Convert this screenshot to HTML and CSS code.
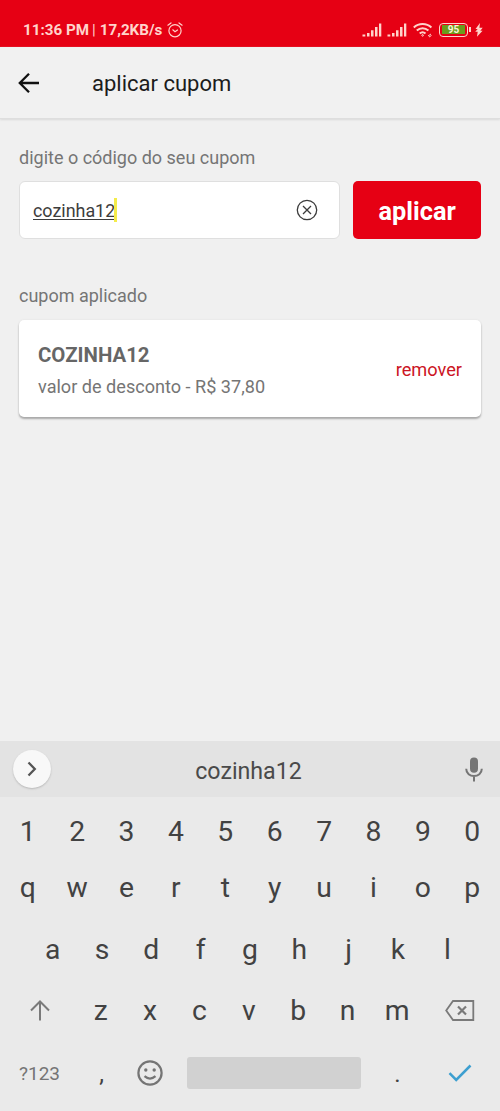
FILE: index.html
```html
<!DOCTYPE html>
<html lang="pt-BR">
<head>
<meta charset="utf-8">
<title>aplicar cupom</title>
<link rel="stylesheet" href="styles.css">
</head>
<body>
<div class="screen">
  <div class="status">
    <span class="clock">11:36 PM</span><span class="divider">|</span><span class="speed">17,2KB/s</span>
    <svg class="alarm" width="16" height="16" viewBox="0 0 16 16" fill="none" stroke="currentColor" stroke-width="1.2" stroke-linecap="round"><circle cx="8" cy="8.7" r="6.1"/><path d="M.9 3.2 4 .9M15.1 3.2 12 .9M5.8 7.8 8 9.7l2.5-1.7"/></svg>
    <div class="indicators">
      <svg width="20" height="14" viewBox="0 0 20 14" fill="currentColor"><path d="M.5 13.5v-2h2.8v2zM5 10h2.5v3.5H5zM9 7.2h2.5v6.3H9zM13 4h2.5v9.5H13zM17 .5h2.3v13H17z"/></svg>
      <svg width="20" height="14" viewBox="0 0 20 14" fill="currentColor"><path d="M.5 13.5v-2h2.8v2zM5 10h2.5v3.5H5zM9 7.2h2.5v6.3H9zM13 4h2.5v9.5H13zM17 .5h2.3v13H17z"/></svg>
      <svg class="wifi" width="20" height="16" viewBox="0 0 20 16" fill="none" stroke="currentColor" stroke-width="2"><path d="M.8 5.4a13 13 0 0 1 17.6 0M3.8 8.6a8.6 8.6 0 0 1 11.6 0M6.7 11.5a4.4 4.4 0 0 1 5.8 0"/><circle cx="9.6" cy="13.4" r=".8" stroke-width="1"/><path stroke-width="1" d="m15 14 3-2m-2 3 2.5-1.5"/></svg>
      <div class="battery"><span class="charge">95</span></div>
      <svg class="bolt" width="8" height="14" viewBox="0 0 8 14" fill="currentColor"><path d="M5 0 .5 6h2.2L.2 8.8h2.5L2 13.8 7.6 7.7H5.3l2.4-3H4.4z"/></svg>
    </div>
  </div>
  <header class="appbar">
    <svg width="22" height="22" viewBox="0 0 22 22" fill="none" stroke="#111" stroke-width="2.3"><path d="M21 11H2M11 1.8 1.8 11l9.2 9.2"/></svg>
    <h1 class="title">aplicar cupom</h1>
  </header>
  <main class="content">
    <label class="label">digite o código do seu cupom</label>
    <div class="form">
      <div class="field">
        <span class="value">cozinha12</span><span class="caret"></span>
        <svg class="clear" width="22" height="22" viewBox="0 0 22 22" fill="none" stroke="#3c3c3c" stroke-width="1.3"><circle cx="11" cy="11" r="9.7"/><path d="m7 7 8 8m0-8-8 8"/></svg>
      </div>
      <button class="apply">aplicar</button>
    </div>
    <div class="label applied">cupom aplicado</div>
    <section class="coupon">
      <div class="details">
        <div class="code">COZINHA12</div>
        <div class="discount">valor de desconto - R$ 37,80</div>
      </div>
      <span class="remove">remover</span>
    </section>
  </main>
  <div class="suggestions">
    <div class="expand"><svg width="10" height="16" viewBox="0 0 10 16" fill="none" stroke="#555" stroke-width="2.3"><path d="m1.5 1.5 6.3 6.5-6.3 6.5"/></svg></div>
    <span class="suggestion">cozinha12</span>
    <svg class="mic" width="18" height="25" viewBox="0 0 18 25" fill="none" stroke="#757575" stroke-width="2"><rect x="5" y=".5" width="8" height="15.3" rx="4" fill="#757575" stroke="none"/><path d="M1.2 11.8c0 9.6 15.6 9.6 15.6 0M9 19v5.5"/></svg>
  </div>
  <div class="keyboard">
    <div class="row numbers"><span>1</span><span>2</span><span>3</span><span>4</span><span>5</span><span>6</span><span>7</span><span>8</span><span>9</span><span>0</span></div>
    <div class="row top"><span>q</span><span>w</span><span>e</span><span>r</span><span>t</span><span>y</span><span>u</span><span>i</span><span>o</span><span>p</span></div>
    <div class="row home"><span>a</span><span>s</span><span>d</span><span>f</span><span>g</span><span>h</span><span>j</span><span>k</span><span>l</span></div>
    <div class="row lower">
      <span class="icon"><svg width="20" height="21" viewBox="0 0 20 21" fill="none" stroke="#7a7a7a" stroke-width="2"><path d="M10 20.5V2M1 10.5l9-9 9 9"/></svg></span>
      <span>z</span><span>x</span><span>c</span><span>v</span><span>b</span><span>n</span><span>m</span>
      <span class="icon backspace"><svg width="30" height="21" viewBox="0 0 30 21" fill="none" stroke="#7a7a7a" stroke-width="1.8"><path d="M8 1h20.3v19H8L1.2 10.5z"/><path stroke-width="2.2" d="m13 6.5 8 8m0-8-8 8"/></svg></span>
    </div>
    <div class="row bottom">
      <span class="symbols">?123</span><span class="comma">,</span>
      <span class="icon"><svg width="26" height="26" viewBox="0 0 26 26" fill="none" stroke="#757575" stroke-width="2.2"><circle cx="13" cy="13" r="11.6"/><path d="M7.5 16.2q5.5 4.8 11 0"/><circle cx="8.8" cy="10" r="1.7" fill="#757575" stroke="none"/><circle cx="17.2" cy="10" r="1.7" fill="#757575" stroke="none"/></svg></span>
      <div class="space"></div>
      <span class="dot">.</span>
      <span class="icon"><svg width="24" height="18" viewBox="0 0 24 18" fill="none" stroke="#3d9fd0" stroke-width="2.5"><path d="m1.5 9.2 6.7 6.8L22.5 1.5"/></svg></span>
    </div>
  </div>
</div>
</body>
</html>
```
FILE: styles.css
```css
* { box-sizing: border-box; }
body { margin: 0; font-family: Roboto, sans-serif; background: #f0f0f0; }
svg { display: block; flex: none; }
.screen { width: 500px; height: 1111px; display: flex; flex-direction: column; overflow: hidden; }

.status { height: 47px; flex: none; background: #e60014; color: #ffd3cb; display: flex; align-items: center; padding: 13px 17px 0 23px; font-size: 15.2px; font-weight: 700; white-space: nowrap; }
.divider { font-weight: 400; margin: 0 4px 0 3px; }
.alarm { margin-left: 5px; }
.indicators { margin-left: auto; display: flex; align-items: center; gap: 5px; }
.wifi { margin-left: 1px; }
.battery { width: 29px; height: 14px; border: 1.5px solid #ffd3cb; border-radius: 4px; padding: 1px 2px; margin: 0 2px 0 1px; position: relative; }
.battery::after { content: ""; position: absolute; right: -4px; top: 3px; width: 2px; height: 5px; background: #ffd3cb; }
.charge { display: block; height: 9px; background: #6a9c1b; font-size: 10px; line-height: 9px; text-align: center; color: #fff3dc; }

.appbar { height: 72px; flex: none; background: #f1f1f1; border-bottom: 1px solid #dedede; box-shadow: 0 1px 2px #d9d9d9; display: flex; align-items: center; padding: 1px 18px 0; gap: 52px; }
.title { margin: 1px 0 0; font-size: 22px; font-weight: 400; color: #1c1c1c; }

.content { flex: 1; padding: 28px 19px 0; }
.label { display: block; font-size: 18px; line-height: 22px; color: #757575; }
.form { display: flex; gap: 13px; margin-top: 12px; }
.field { width: 322px; height: 58px; background: #fff; border: 1.5px solid #dfdfdf; border-radius: 6px; display: flex; align-items: center; padding: 0 21px 0 13px; }
.value { font-size: 17.9px; color: #3d3d3d; text-decoration: underline; text-decoration-thickness: 1px; text-underline-offset: 2px; }
.caret { width: 3px; height: 24px; margin-left: -1px; background: #f4ec4a; }
.clear { margin-left: auto; }
.apply { width: 128px; height: 58px; border: 0; border-radius: 5px; background: #e60014; color: #fff; font: 700 25.3px Roboto, sans-serif; padding: 3px 0 0; }
.applied { margin-top: 46px; }
.coupon { height: 97px; margin-top: 13px; padding: 0 19px; background: #fff; border-radius: 5px; box-shadow: 0 2px 2px #a9a9a9, 0 0 2px #ddd; display: flex; justify-content: space-between; align-items: center; }
.details { padding-top: 3px; }
.code { font-size: 20.4px; line-height: 24px; font-weight: 700; color: #666; }
.discount { font-size: 18.1px; line-height: 22px; color: #757575; margin-top: 9px; }
.remove { font-size: 18.2px; color: #cc1524; margin-top: 1px; }

.suggestions { height: 56px; flex: none; background: #e3e3e3; display: grid; grid-template-columns: 38px 1fr 38px; align-items: center; padding: 0 8px 0 13px; }
.expand { width: 38px; height: 38px; border-radius: 50%; background: #f8f8f8; box-shadow: 0 1px 2px #b9b9b9; display: grid; place-items: center; }
.suggestion { text-align: center; font-size: 23.2px; color: #4a4a4a; padding: 3px 8px 0 0; }
.mic { justify-self: center; margin-left: 2px; }

.keyboard { height: 314px; flex: none; background: #eaeaea; padding-top: 8px; color: #424242; font-size: 28.3px; }
.row { display: grid; grid-template-columns: repeat(10, 1fr); padding: 0 3px; align-items: center; justify-items: center; line-height: 32px; }
.numbers { height: 54px; }
.top { height: 56px; padding-top: 2px; }
.home { height: 69px; grid-template-columns: repeat(9, 1fr); padding: 0 28px; }
.lower { height: 53px; grid-template-columns: 73px repeat(7, 49.4px) 1fr; }
.backspace { margin-left: 2px; }
.bottom { height: 72px; grid-template-columns: 73px 49.4px 49.4px 198px 49.4px 1fr; }
.symbols { font-size: 19px; color: #757575; padding-top: 1px; }
.comma { font-size: 24px; padding: 2px 0 0 2px; }
.dot { font-size: 24px; padding-top: 1px; }
.space { width: 174px; height: 32px; background: #d1d1d1; border-radius: 3px; }
```
